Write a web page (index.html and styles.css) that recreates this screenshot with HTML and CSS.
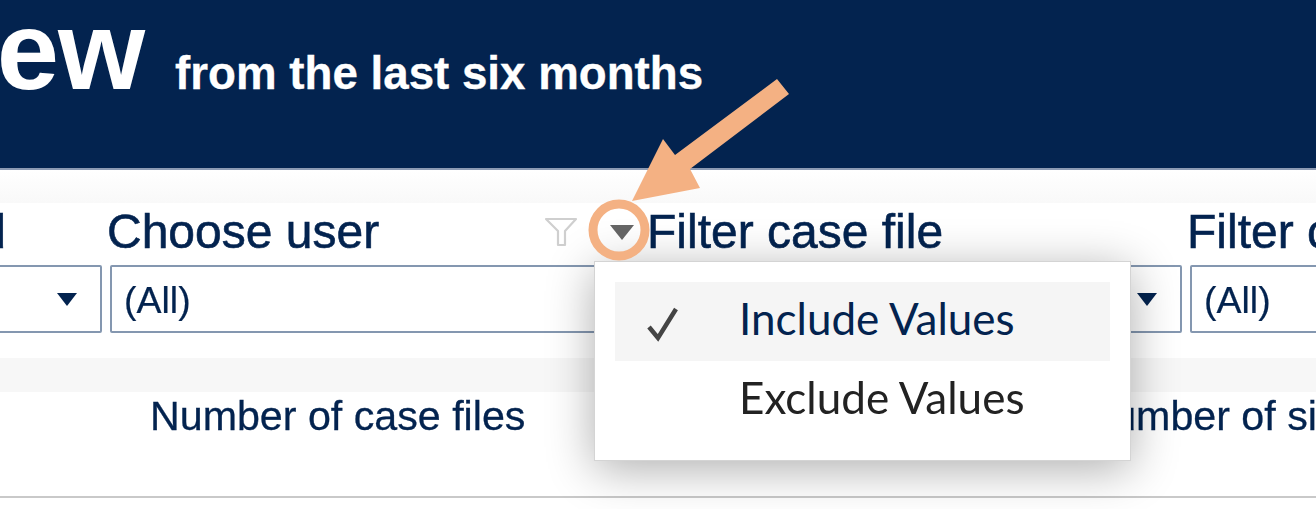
FILE: index.html
```html
<!DOCTYPE html>
<html lang="en">
<head>
<meta charset="utf-8">
<title>Overview</title>
<link rel="stylesheet" href="styles.css">
</head>
<body>
<div class="page">
  <header class="banner">
    <h1 class="title">Overview</h1>
    <span class="subtitle">from the last six months</span>
  </header>
  <div class="spacer"></div>
  <section class="filters">
    <div class="filter">
      <div class="label label-end">Choose period</div>
      <div class="select"><span class="value">(All)</span><span class="caret"></span></div>
    </div>
    <div class="filter">
      <div class="label">
        <span>Choose user</span>
        <svg class="funnel" width="34" height="30" viewBox="0 0 34 30" aria-hidden="true"><path d="M2 2H32L21 14V28H14V14Z" fill="none" stroke="#cfcfcf" stroke-width="2.2" stroke-linejoin="round"/></svg>
        <span class="menu-caret"></span>
      </div>
      <div class="select"><span class="value">(All)</span></div>
    </div>
    <div class="filter">
      <div class="label">Filter case file</div>
      <div class="select"><span class="value">(All)</span><span class="caret"></span></div>
    </div>
    <div class="filter">
      <div class="label">Filter case type</div>
      <div class="select"><span class="value">(All)</span></div>
    </div>
  </section>
  <div class="band"></div>
  <section class="metrics">
    <span class="metric metric-a">Number of case files</span>
    <span class="metric metric-b">Number of sites</span>
  </section>
</div>

<div class="menu">
  <div class="menu-item is-active">
    <svg class="check" width="34" height="36" viewBox="0 0 34 36" aria-hidden="true"><path d="M3 21L12 32L30 3" fill="none" stroke="#444" stroke-width="4.5"/></svg>
    <span>Include Values</span>
  </div>
  <div class="menu-item"><span>Exclude Values</span></div>
</div>

<svg class="callout" width="1316" height="509" viewBox="0 0 1316 509" aria-hidden="true">
  <path d="M777 79L789 94L690 169L700 188L632 201L663 139L675 155Z" fill="#f4b183"/>
  <circle cx="619" cy="230" r="26" fill="none" stroke="#f4b183" stroke-width="9"/>
</svg>
</body>
</html>
```
FILE: styles.css
```css
* { box-sizing: border-box; }
html, body { margin: 0; height: 100%; overflow: hidden; background: #fff; }
body { width: 1316px; height: 509px; position: relative; font-family: "Liberation Sans", Arial, sans-serif; color: #03234f; }
.page { filter: blur(0.7px); height: 509px; overflow: hidden; }

.banner { height: 170px; background: #03234f; border-bottom: 2px solid #8c9ab3; display: flex; align-items: flex-start; color: #fff; font-weight: 700; overflow: hidden; }
.title { margin: -13px 0 0 -346px; font-size: 112px; line-height: 128px; font-weight: 700; letter-spacing: -1px; flex: none; }
.subtitle { margin: 46px 0 0 31px; font-size: 45.7px; line-height: 56px; white-space: nowrap; -webkit-text-stroke: 0.3px #fff; }

.spacer { height: 33px; background: linear-gradient(#fff, #f9f9f9); }

.filters { display: flex; gap: 8px; margin-left: -430px; width: 2300px; height: 130px; }
.filter { width: 532px; flex: none; display: flex; flex-direction: column; }
.label { height: 62px; margin-left: -3px; padding-bottom: 4px; font-size: 48px; line-height: 58px; white-space: nowrap; display: flex; align-items: center; -webkit-text-stroke: 0.6px #03234f; }
.label-end { justify-content: flex-end; padding-right: 96px; }
.funnel { margin-left: auto; }
.menu-caret { width: 0; height: 0; margin: 0 8px 0 32px; border-left: 12px solid transparent; border-right: 12px solid transparent; border-top: 15px solid #666; }
.select { height: 68px; border: 2px solid #8497b0; border-radius: 2px; background: #fff; display: flex; align-items: center; justify-content: space-between; padding: 0 23px 0 12px; }
.value { font-size: 37.5px; line-height: 64px; padding-top: 2px; -webkit-text-stroke: 0.2px #03234f; }
.caret { width: 0; height: 0; border-left: 10px solid transparent; border-right: 10px solid transparent; border-top: 13px solid #03234f; }

.band { height: 34px; margin-top: 25px; background: #f7f7f7; }

.metrics { height: 106px; border-bottom: 2px solid #c9c9c9; display: flex; font-size: 41.2px; line-height: 48px; white-space: nowrap; -webkit-text-stroke: 0.3px #03234f; }
.metric { display: block; }
.metric-a { margin-left: 150px; }
.metric-b { margin-left: 558px; }

.menu { position: absolute; left: 594px; top: 261px; width: 537px; height: 200px; background: #fff; border: 1px solid #d4d4d4; padding: 20px; font-family: Lato, "Liberation Sans", sans-serif; font-size: 44px; color: #222; box-shadow: 0 8px 44px rgba(0,0,0,.32); filter: blur(0.6px); }
.menu-item { height: 79px; position: relative; display: flex; align-items: center; padding-left: 124px; line-height: 70px; padding-bottom: 8px; }
.menu-item.is-active { background: #f5f5f5; color: #03234f; }
.check { position: absolute; left: 31px; top: 24px; }

.callout { position: absolute; left: 0; top: 0; filter: blur(0.4px); }
```
